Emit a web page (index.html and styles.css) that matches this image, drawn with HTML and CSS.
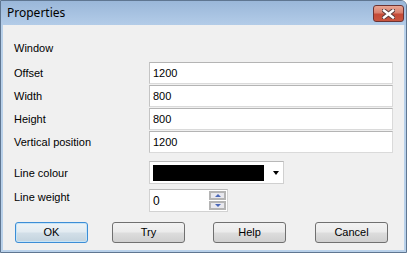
FILE: index.html
```html
<!DOCTYPE html>
<html lang="en">
<head>
    <meta charset="UTF-8">
    <meta name="viewport" content="width=device-width, initial-scale=1.0">
    <title>Properties</title>
    <link rel="stylesheet" href="styles.css">
</head>
<body>
    <div class="window">
        <div class="titlebar">
            <span class="title">Properties</span>
            <div class="close">
                <svg width="13" height="10" viewBox="0 0 13 10">
                    <path d="M2 1.5 L11 8.5 M11 1.5 L2 8.5" stroke="#5b3b3b" stroke-width="4.4" stroke-linecap="square"/>
                    <path d="M2 1.5 L11 8.5 M11 1.5 L2 8.5" stroke="#ffffff" stroke-width="2.4" stroke-linecap="square"/>
                </svg>
            </div>
        </div>
        <div class="client">
            <div class="section">Window</div>
            <div class="row">
                <label>Offset</label>
                <div class="field">1200</div>
            </div>
            <div class="row">
                <label>Width</label>
                <div class="field">800</div>
            </div>
            <div class="row">
                <label>Height</label>
                <div class="field">800</div>
            </div>
            <div class="row">
                <label>Vertical position</label>
                <div class="field">1200</div>
            </div>
            <div class="row row-combo">
                <label>Line colour</label>
                <div class="combo">
                    <span class="swatch"></span>
                    <span class="arrow"></span>
                </div>
            </div>
            <div class="row row-spin">
                <label>Line weight</label>
                <div class="spin">
                    <span class="spin-value">0</span>
                    <span class="spin-btns">
                        <span class="spin-btn"><i class="tri-up"></i></span>
                        <span class="spin-btn"><i class="tri-down"></i></span>
                    </span>
                </div>
            </div>
            <div class="buttons">
                <div class="btn btn-default">OK</div>
                <div class="btn btn-try">Try</div>
                <div class="btn btn-help">Help</div>
                <div class="btn btn-cancel">Cancel</div>
            </div>
        </div>
    </div>
</body>
</html>
```

FILE: styles.css
```css
body {
    margin: 0;
    width: 407px;
    height: 253px;
    overflow: hidden;
    background: #ffffff;
}
.window {
    box-sizing: border-box;
    width: 407px;
    height: 253px;
    border: 1px solid #5f7691;
    border-top-right-radius: 6px;
    background: #b9d1ea;
    padding: 0 2px 2px 2px;
    display: flex;
    flex-direction: column;
}
.titlebar {
    height: 24px;
    flex: none;
    display: flex;
    align-items: flex-start;
    justify-content: space-between;
    padding: 0 2px 0 5px;
    margin: 0 -2px;
    background: linear-gradient(#9ab7d9, #b3cce8);
    border-top-right-radius: 5px;
}
.title {
    font-family: "Noto Sans", "Open Sans", sans-serif;
    font-size: 12px;
    line-height: 24px;
    color: #000;
    margin-left: 1px;
}
.close {
    box-sizing: border-box;
    width: 31px;
    height: 17px;
    margin-top: 4px;
    border: 1px solid #6b3333;
    border-radius: 3px;
    background: linear-gradient(#e8a593 0%, #d9806e 45%, #c44a37 55%, #c9553f 100%);
    display: flex;
    justify-content: center;
    align-items: center;
}
.close svg {
    display: block;
}
.client {
    flex: 1;
    background: #f0f0f0;
    padding: 15px 10px 0 11px;
    font-family: "Liberation Sans", Arial, sans-serif;
    font-size: 11px;
    color: #000;
}
.section {
    line-height: 16px;
    margin-bottom: 6px;
}
.row {
    display: flex;
    align-items: center;
    height: 22px;
    margin-top: 1px;
}
.row label {
    width: 135px;
    flex: none;
}
.field {
    box-sizing: border-box;
    width: 244px;
    height: 22px;
    background: #fff;
    border: 1px solid #dadada;
    border-top-color: #b4b4b4;
    border-left-color: #c4c4c4;
    padding-left: 3px;
    line-height: 20px;
}
.row-combo {
    height: 23px;
    margin-top: 8px;
}
.combo {
    box-sizing: border-box;
    width: 135px;
    height: 23px;
    background: #fff;
    border: 1px solid #d0d0d0;
    border-top-color: #b8b8b8;
    display: flex;
    align-items: center;
    padding: 0 0 0 3px;
}
.swatch {
    width: 111px;
    height: 16px;
    background: #000;
}
.arrow {
    margin-left: 9px;
    width: 0;
    height: 0;
    border-left: 3.5px solid transparent;
    border-right: 3.5px solid transparent;
    border-top: 4px solid #000;
}
.row-spin {
    height: 23px;
    margin-top: 5px;
}
.row-spin label {
    align-self: flex-start;
    line-height: 17px;
}
.spin {
    box-sizing: border-box;
    width: 79px;
    height: 23px;
    background: #fff;
    border: 1px solid #d2d2d2;
    border-top-color: #b8b8b8;
    display: flex;
    justify-content: space-between;
    padding: 1px 1px 1px 3px;
}
.spin-value {
    line-height: 20px;
    font-size: 12px;
}
.spin-btns {
    display: flex;
    flex-direction: column;
    gap: 1px;
}
.spin-btn {
    box-sizing: border-box;
    width: 17px;
    height: 10px;
    border: 2px solid #b4b4b4;
    background: #e8e8ee;
    display: flex;
    justify-content: center;
    align-items: center;
}
.tri-up, .tri-down {
    width: 0;
    height: 0;
    border-left: 3px solid transparent;
    border-right: 3px solid transparent;
}
.tri-up {
    border-bottom: 3px solid #4a67b8;
}
.tri-down {
    border-top: 3px solid #4a67b8;
}
.buttons {
    display: flex;
    margin: 10px 0 0 1px;
}
.btn {
    box-sizing: border-box;
    width: 73px;
    height: 21px;
    border: 1px solid #707070;
    border-radius: 3px;
    background: linear-gradient(#f2f2f2 0%, #ebebeb 48%, #dddddd 52%, #cfcfcf 100%);
    text-align: center;
    line-height: 19px;
}
.btn-try {
    margin-left: 24px;
}
.btn-help {
    margin-left: 28px;
}
.btn-cancel {
    margin-left: 29px;
}
.btn-default {
    border-color: #3b8dd6;
    box-shadow: inset 0 0 0 1px #c6e4f7;
    background: linear-gradient(#edf3f7 0%, #e2ebf1 48%, #d2dfe8 52%, #c3d3de 100%);
}
```
